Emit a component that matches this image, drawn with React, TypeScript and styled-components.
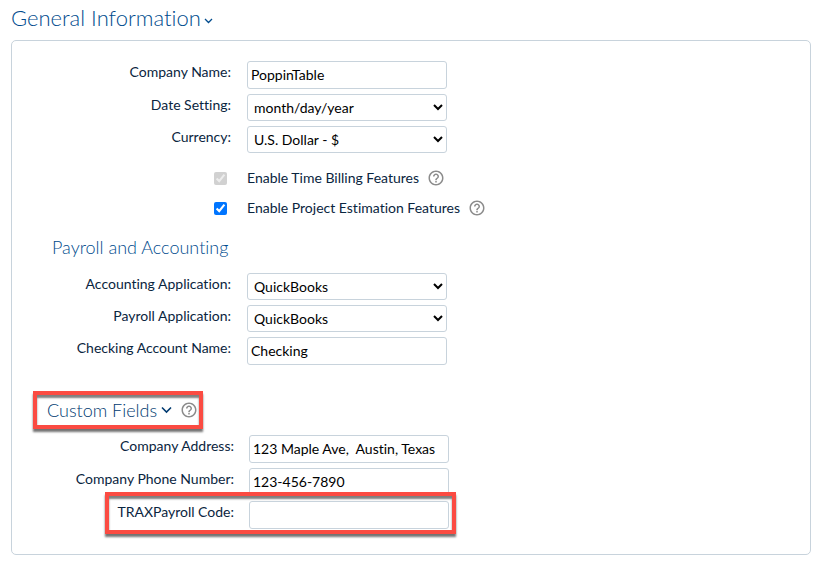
import React, { useId, useState } from "react";
import styled, { createGlobalStyle, css } from "styled-components";
import { MdHelpOutline } from "react-icons/md";

const GlobalStyle = createGlobalStyle`
  *, *::before, *::after { box-sizing: border-box; }
  body {
    margin: 0;
    background: #fff;
    color: #0a2540;
    font-family: Lato, "Open Sans", sans-serif;
    font-size: 14px;
    font-variant-ligatures: none;
  }
`;

const Page = styled.main`
  padding: 4px 8px 10px 11px;
`;

const titleText = css`
  margin: 0;
  font-weight: 300;
  color: #004b8d;
`;

const PageTitle = styled.h1`
  ${titleText}
  font-size: 22px;
  line-height: 28px;
`;

const SectionTitle = styled.h2<{ $dark?: boolean }>`
  ${titleText}
  font-size: 18px;
  line-height: 24px;
  ${(p) => p.$dark && "color: #003a70;"}
`;

const Toggle = styled.button<{ $gap: number }>`
  display: inline-flex;
  align-items: center;
  gap: ${(p) => p.$gap}px;
  padding: 0;
  border: 0;
  background: none;
  color: inherit;
  font: inherit;
  font-variant-ligatures: none;
  cursor: pointer;
`;

const TitleChevron = styled.svg<{ $low?: boolean }>`
  fill: none;
  stroke: currentColor;
  ${(p) => p.$low && "margin-top: 5px;"}
`;

const Panel = styled.section`
  margin-top: 8px;
  padding: 20px 20px 25px;
  border: 1px solid #c8d3dc;
  border-radius: 5px;
`;

const Fields = styled.div<{ $label: number; $gap: number }>`
  display: grid;
  gap: 5px;
  --label: ${(p) => p.$label}px;
  --gap: ${(p) => p.$gap}px;
`;

const FieldRow = styled.div`
  position: relative;
  display: grid;
  grid-template-columns: var(--label) minmax(0, 200px);
  column-gap: var(--gap);
  align-items: start;
`;

const FieldLabel = styled.label`
  text-align: right;
  line-height: 22px;
  white-space: nowrap;
`;

const control = css`
  width: 100%;
  margin: 0;
  border: 1px solid #c8d3dc;
  border-radius: 3px;
  background: #fff;
  color: #000;
  font: inherit;
  font-variant-ligatures: none;
`;

const TextInput = styled.input`
  ${control}
  height: 28px;
  padding: 0 3px 1px;
`;

const Select = styled.select`
  ${control}
  height: 27px;
  padding: 0 2px;
`;

const CheckList = styled.div`
  display: grid;
  gap: 6px;
  margin: 13px 0 15px;
`;

const CheckRow = styled.div`
  display: grid;
  grid-template-columns: 13px auto 18px;
  justify-content: start;
  align-items: center;
  margin-left: 182px;
  height: 24px;
`;

const Checkbox = styled.input`
  width: 13px;
  height: 13px;
  margin: 0;
`;

const CheckLabel = styled.label`
  margin: 0 8px 0 20px;
  line-height: 24px;
`;

const HelpButton = styled.button`
  display: flex;
  padding: 0;
  border: 0;
  background: none;
  color: #8c8c8c;
  cursor: pointer;
`;

const AccountingTitle = styled.div`
  margin: 0 0 14px 20px;
`;

const redFrame = css`
  border: 4px solid #fb4b42;
  box-shadow: 0 3px 2px rgba(0, 0, 0, 0.55), inset 0 3px 2px rgba(0, 0, 0, 0.5);
`;

const CustomHeading = styled.div`
  ${redFrame}
  display: flex;
  align-items: center;
  gap: 8px;
  width: fit-content;
  height: 38px;
  margin: 26px 0 6px 1px;
  padding: 0 1px 1px 10px;
`;

const RowHighlight = styled.span`
  ${redFrame}
  position: absolute;
  inset: -9px auto -5px 73px;
  width: 351px;
  pointer-events: none;
`;

function Help({ topic }: { topic: string }) {
  return (
    <HelpButton type="button" aria-label={`Help: ${topic}`}>
      <MdHelpOutline size={18} />
    </HelpButton>
  );
}

function TextField({ label, value, highlight }: { label: string; value: string; highlight?: boolean }) {
  const id = useId();
  return (
    <FieldRow>
      <FieldLabel htmlFor={id}>{label}:</FieldLabel>
      <TextInput id={id} type="text" defaultValue={value} />
      {highlight && <RowHighlight />}
    </FieldRow>
  );
}

function SelectField({ label, options }: { label: string; options: string[] }) {
  const id = useId();
  return (
    <FieldRow>
      <FieldLabel htmlFor={id}>{label}:</FieldLabel>
      <Select id={id}>
        {options.map((o) => (
          <option key={o}>{o}</option>
        ))}
      </Select>
    </FieldRow>
  );
}

function CheckField({ label, disabled }: { label: string; disabled?: boolean }) {
  const id = useId();
  return (
    <CheckRow>
      <Checkbox id={id} type="checkbox" defaultChecked disabled={disabled} />
      <CheckLabel htmlFor={id}>{label}</CheckLabel>
      <Help topic={label} />
    </CheckRow>
  );
}

export default function App() {
  const [open, setOpen] = useState(true);
  const [customOpen, setCustomOpen] = useState(true);
  return (
    <>
      <GlobalStyle />
      <Page>
        <PageTitle>
          <Toggle type="button" $gap={3} aria-expanded={open} onClick={() => setOpen(!open)}>
            General Information
            <TitleChevron $low width="9" height="6" viewBox="0 0 9 6" strokeWidth="1.3">
              <path d="M1 1l3.5 3.5L8 1" />
            </TitleChevron>
          </Toggle>
        </PageTitle>
        {open && (
          <Panel>
            <Fields $label={199} $gap={16}>
              <TextField label="Company Name" value="PoppinTable" />
              <SelectField label="Date Setting" options={["month/day/year", "day/month/year"]} />
              <SelectField label="Currency" options={["U.S. Dollar - $", "Euro - €"]} />
            </Fields>
            <CheckList>
              <CheckField label="Enable Time Billing Features" disabled />
              <CheckField label="Enable Project Estimation Features" />
            </CheckList>
            <AccountingTitle>
              <SectionTitle>Payroll and Accounting</SectionTitle>
            </AccountingTitle>
            <Fields $label={199} $gap={16}>
              <SelectField label="Accounting Application" options={["QuickBooks"]} />
              <SelectField label="Payroll Application" options={["QuickBooks"]} />
              <TextField label="Checking Account Name" value="Checking" />
            </Fields>
            <CustomHeading>
              <SectionTitle $dark>
                <Toggle
                  type="button"
                  $gap={4}
                  aria-expanded={customOpen}
                  onClick={() => setCustomOpen(!customOpen)}
                >
                  Custom Fields
                  <TitleChevron width="11" height="8" viewBox="0 0 11 8" strokeWidth="1.6">
                    <path d="M1 1.5l4.5 4.5L10 1.5" />
                  </TitleChevron>
                </Toggle>
              </SectionTitle>
              <Help topic="Custom Fields" />
            </CustomHeading>
            {customOpen && (
              <Fields $label={202} $gap={15}>
                <TextField label="Company Address" value="123 Maple Ave,  Austin, Texas" />
                <TextField label="Company Phone Number" value="123-456-7890" />
                <TextField label="TRAXPayroll Code" value="" highlight />
              </Fields>
            )}
          </Panel>
        )}
      </Page>
    </>
  );
}
